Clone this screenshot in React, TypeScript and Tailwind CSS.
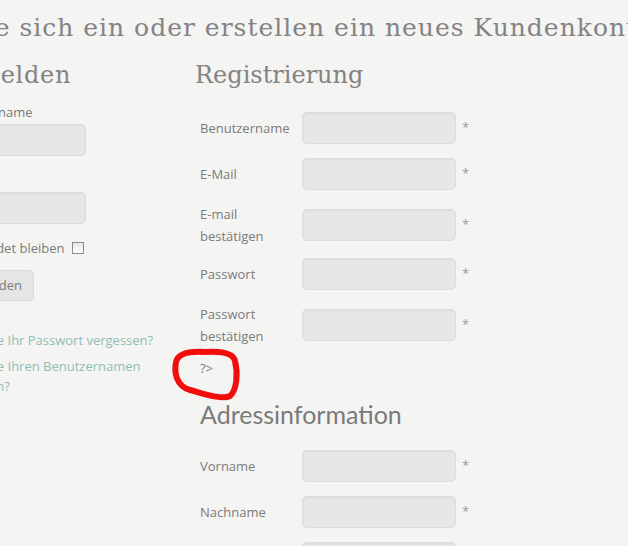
import React from "react";

const slab = "font-['DejaVu_Serif','Liberation_Serif',serif] text-[#838383] leading-[32px]";
const sans = "font-['Lato','Open_Sans',sans-serif] text-[#7a7a7a] leading-[32px]";
const label = "font-['Open_Sans','Liberation_Sans',sans-serif] text-[13px] text-[#7b7b7b]";
const field =
  "h-[32px] rounded-[5px] border border-[#dcdcdc] bg-[#e7e7e7] shadow-[inset_0_1px_2px_rgba(0,0,0,0.05)]";

function FormRow({ title, mt }: { title: React.ReactNode; mt: string }) {
  return (
    <div className={`flex items-center ${mt}`}>
      <div className={`w-[102px] pr-[10px] leading-[22px] ${label}`}>{title}</div>
      <div className={`w-[154px] ${field}`} />
      <span className={`ml-[6px] ${label} text-[#999]`}>*</span>
    </div>
  );
}

function LoginColumn() {
  return (
    <div className="flex w-[252px] shrink-0 flex-col">
      <h2 className={`${slab} text-[24px] tracking-[0.7px]`}>Anmelden</h2>
      <div className={`mt-[11px] leading-[20px] ${label}`}>Benutzername</div>
      <div className={`mt-[2px] w-[143px] ${field}`} />
      <div className={`mt-[14px] leading-[20px] ${label}`}>Passwort</div>
      <div className={`mt-[2px] w-[143px] ${field}`} />
      <div className={`mt-[14px] flex items-center leading-[20px] ${label}`}>
        Angemeldet bleiben
        <span className="ml-[8px] h-[12px] w-[12px] border border-[#8a8a8a] bg-gradient-to-b from-[#e9e9e9] to-[#fdfdfd]" />
      </div>
      <button
        className={`mt-[12px] h-[31px] w-[91px] rounded-[4px] border border-[#dadada] bg-[#e5e5e5] text-left pl-[16px] ${label}`}
      >
        Anmelden
      </button>
      <div className="mt-[29px] w-[215px] font-['Open_Sans','Liberation_Sans',sans-serif] text-[13px] leading-[20px] text-[#8fbdb6]">
        <a className="block">Haben Sie Ihr Passwort vergessen?</a>
        <a className="mt-[6px] block">Haben Sie Ihren Benutzernamen vergessen?</a>
      </div>
    </div>
  );
}

function RegisterColumn() {
  return (
    <div className="flex flex-col">
      <h2 className={`${slab} text-[24px]`}>Registrierung</h2>
      <div className="flex flex-col pl-[5px]">
        <FormRow title="Benutzername" mt="mt-[21px]" />
        <FormRow title="E-Mail" mt="mt-[14px]" />
        <FormRow title="E-mail bestätigen" mt="mt-[13px]" />
        <FormRow title="Passwort" mt="mt-[11px]" />
        <FormRow title="Passwort bestätigen" mt="mt-[13px]" />
        <div className={`mt-[11px] leading-[20px] ${label}`}>?&gt;</div>
        <h2 className={`mt-[20px] ${sans} text-[25px]`}>Adressinformation</h2>
        <FormRow title="Vorname" mt="mt-[20px]" />
        <FormRow title="Nachname" mt="mt-[14px]" />
        <FormRow title="Straße" mt="mt-[14px]" />
      </div>
    </div>
  );
}

export default function App() {
  return (
    <div className="relative h-[546px] w-[628px] overflow-hidden bg-[#f4f4f2]">
      <div className="ml-[-57px] flex flex-col">
        <h1 className={`${slab} ml-[-159px] whitespace-nowrap pt-[12px] text-[25px] tracking-[1px]`}>
          Bitte melden Sie sich ein oder erstellen ein neues Kundenkonto
        </h1>
        <div className="mt-[15px] flex">
          <LoginColumn />
          <RegisterColumn />
        </div>
      </div>
      {/* hand-drawn marker around the stray "?>" */}
      <svg className="pointer-events-none absolute left-0 top-0" width="628" height="546">
        <path
          d="M205 352 C218 351 233 352 235 361 C238 373 237 390 230 396 C222 400 205 394 190 390 C176 386 174 372 176 362 C178 353 190 351 205 352 Z"
          fill="none"
          stroke="#f20d0d"
          strokeWidth="6"
          strokeLinecap="round"
          strokeLinejoin="round"
        />
      </svg>
    </div>
  );
}
